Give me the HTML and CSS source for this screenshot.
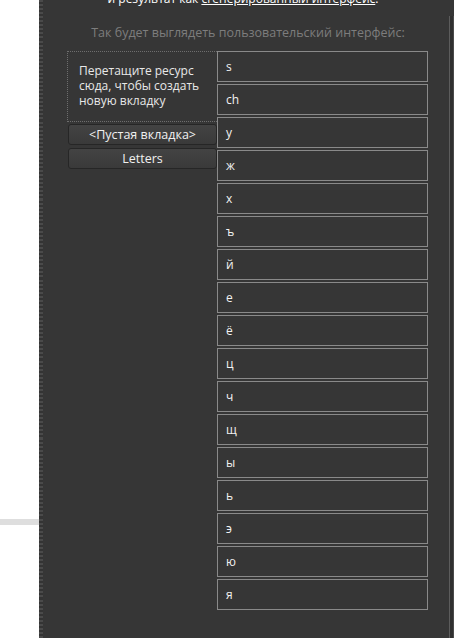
FILE: index.html
```html
<!DOCTYPE html>
<html lang="ru">
<head>
  <meta charset="UTF-8">
  <meta name="viewport" content="width=device-width, initial-scale=1.0">
  <title>Редактор вкладок</title>
  <link rel="stylesheet" href="styles.css">
</head>
<body>

<div class="page">
  <!-- Light strip of the host page -->
  <div class="host">
    <div class="host-bar"></div>
  </div>

  <!-- Dark editor panel -->
  <div class="panel">
    <div class="panel-body">
      <p class="intro">и результат как <a href="#">сгенерированный интерфейс</a>.</p>
      <p class="caption">Так будет выглядеть пользовательский интерфейс:</p>

      <div class="preview">
        <div class="tabs">
          <div class="drop-zone">Перетащите ресурс сюда, чтобы создать новую вкладку</div>
          <button class="tab-btn">&lt;Пустая вкладка&gt;</button>
          <button class="tab-btn">Letters</button>
        </div>

        <ul class="items" id="items"></ul>
      </div>
    </div>
    <div class="scroll-edge"></div>
  </div>
</div>

<script>
  // Fill the resource list
  const letters = ['s', 'ch', 'y', 'ж', 'х', 'ъ', 'й', 'е', 'ё', 'ц', 'ч', 'щ', 'ы', 'ь', 'э', 'ю', 'я'];
  const list = document.getElementById('items');
  letters.forEach(letter => {
    const li = document.createElement('li');
    li.className = 'item';
    li.textContent = letter;
    list.appendChild(li);
  });
</script>
</body>
</html>
```

FILE: styles.css
```css
body {
  margin: 0;
  background: #ffffff;
  font-family: "Open Sans", "Noto Sans", sans-serif;
  font-size: 12px;
}
.page {
  display: flex;
  height: 638px;
  overflow: hidden;
}
.host {
  width: 39px;
  flex-shrink: 0;
  background: #ffffff;
  padding-top: 519px;
}
.host-bar {
  height: 6px;
  background: #dedede;
}
.panel {
  flex: 1;
  display: flex;
  background: #363636;
  border-left: 4px solid #3e3e3e;
  border-image: repeating-linear-gradient(180deg, #4a4a4a 0 2px, #343434 2px 4px) 4;
}
.panel-body {
  flex: 1;
  padding-left: 24px;
}
.scroll-edge {
  width: 3px;
  margin-top: 16px;
  border-left: 1px solid #5c5c5c;
  border-right: 1px solid #4a4a4a;
  background: #303030;
}
.intro {
  margin: -9px 0 0;
  line-height: 16px;
  color: #ffffff;
  text-align: center;
  padding-right: 30px;
}
.intro a {
  color: #ffffff;
}
.caption {
  margin: 18px 0 0;
  line-height: 16px;
  color: #7d7d7d;
  text-align: center;
  padding-right: 20px;
  font-size: 12.5px;
}
.preview {
  display: flex;
  margin-top: 10px;
}
.tabs {
  width: 150px;
  display: flex;
  flex-direction: column;
}
.drop-zone {
  height: 51px;
  padding: 11px 4px 7px 11px;
  border: 1px dotted #6e6e6e;
  border-right: none;
  color: #e8e8e8;
  line-height: 15px;
}
.tab-btn {
  height: 21px;
  margin: 2px 0 1px 1px;
  width: 149px;
  padding: 0;
  font: inherit;
  font-size: 12.5px;
  color: #f0f0f0;
  background: linear-gradient(#434343, #3a3a3a);
  border: 1px solid #262626;
  border-radius: 3px;
  cursor: pointer;
}
.items {
  list-style: none;
  margin: 0;
  padding: 0;
}
.item {
  width: 201px;
  height: 29px;
  margin-bottom: 2px;
  padding-left: 8px;
  border: 1px solid #8a8a8a;
  color: #f2f2f2;
  line-height: 29px;
}
```
